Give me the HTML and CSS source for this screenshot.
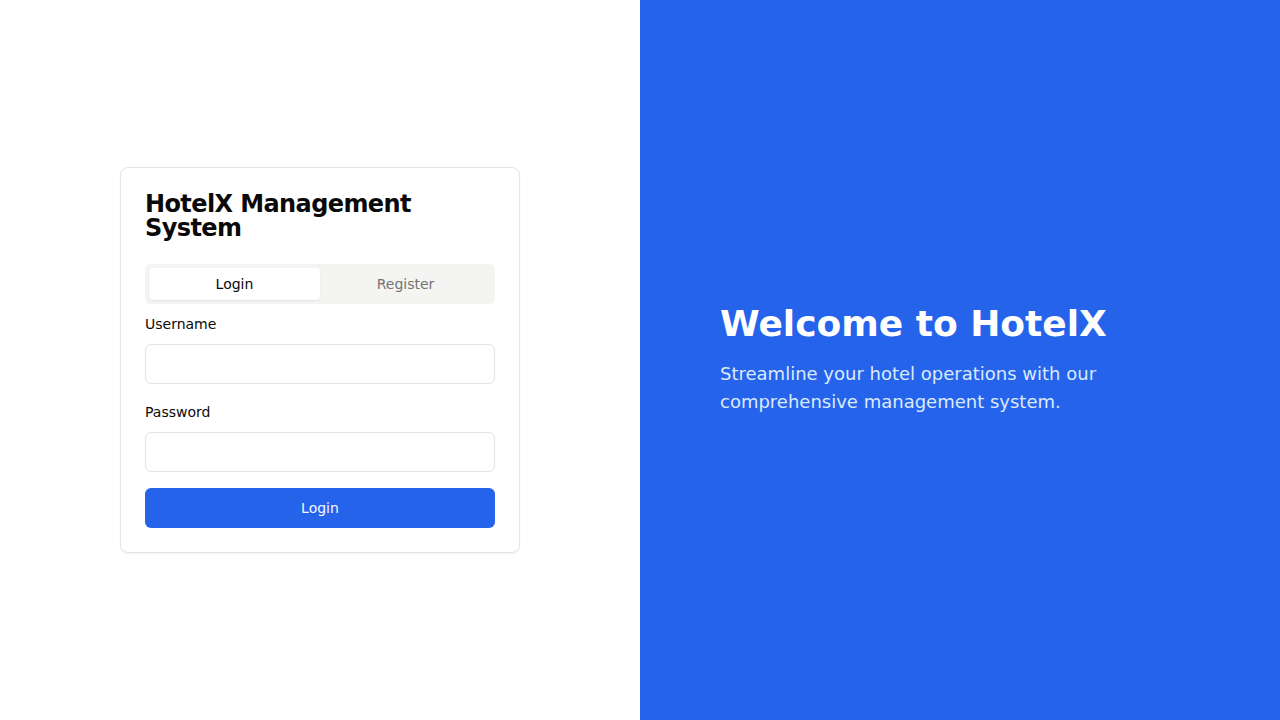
FILE: index.html
```html
<!DOCTYPE html>
<html lang="en">
<head>
<meta charset="utf-8">
<title>HotelX Management System</title>
<link rel="stylesheet" href="styles.css">
</head>
<body>
<div class="page">
  <section class="left">
    <div class="card">
      <h1 class="card-title">HotelX Management System</h1>
      <div class="tabs">
        <div class="tab-list">
          <button class="tab active">Login</button>
          <button class="tab">Register</button>
        </div>
        <form class="form">
          <div class="field">
            <label class="label" for="username">Username</label>
            <input class="input" id="username" type="text">
          </div>
          <div class="field">
            <label class="label" for="password">Password</label>
            <input class="input" id="password" type="password">
          </div>
          <button class="submit" type="button">Login</button>
        </form>
      </div>
    </div>
  </section>
  <section class="right">
    <div class="hero">
      <h2 class="hero-title">Welcome to HotelX</h2>
      <p class="hero-text">Streamline your hotel operations with our comprehensive management system.</p>
    </div>
  </section>
</div>
</body>
</html>
```

FILE: styles.css
```css
* { box-sizing: border-box; }
html, body { margin: 0; padding: 0; }
body {
  font-family: "DejaVu Sans", sans-serif;
  color: #0a0a0a;
  background: #ffffff;
}
.page {
  display: flex;
  width: 1280px;
  height: 720px;
}
.left {
  width: 640px;
  height: 100%;
  display: flex;
  align-items: center;
  justify-content: center;
  background: #ffffff;
}
.card {
  width: 400px;
  border: 1px solid #e4e4e7;
  border-radius: 8px;
  background: #fff;
  box-shadow: 0 1px 2px rgba(0,0,0,0.05);
  padding: 24px;
}
.card-title {
  margin: 0 0 24px;
  font-size: 24px;
  line-height: 24px;
  font-weight: 700;
  letter-spacing: -0.6px;
  color: #0a0a0a;
}
.tab-list {
  display: grid;
  grid-template-columns: 1fr 1fr;
  height: 40px;
  padding: 4px;
  background: #f4f4f3;
  border-radius: 6px;
}
.tab {
  border: 0;
  background: transparent;
  font-family: "DejaVu Sans", sans-serif;
  font-size: 14px;
  color: #737373;
  border-radius: 4px;
  padding: 0;
}
.tab.active {
  background: #ffffff;
  color: #0a0a0a;
  box-shadow: 0 1px 2px rgba(0,0,0,0.08);
}
.form {
  margin-top: 10px;
  display: flex;
  flex-direction: column;
}
.field {
  display: flex;
  flex-direction: column;
  gap: 10px;
  margin-bottom: 18px;
}
.field:last-of-type { margin-bottom: 16px; }
.label {
  font-size: 14px;
  line-height: 20px;
  color: #0a0a0a;
}
.input {
  height: 40px;
  width: 100%;
  border: 1px solid #e4e4e7;
  border-radius: 6px;
  background: #fff;
  font-family: "DejaVu Sans", sans-serif;
  font-size: 14px;
  padding: 0 12px;
}
.submit {
  height: 40px;
  width: 100%;
  border: 0;
  border-radius: 6px;
  background: #2563eb;
  color: #f5f8ff;
  font-family: "DejaVu Sans", sans-serif;
  font-size: 14px;
}
.right {
  width: 640px;
  height: 100%;
  background: #2563eb;
  display: flex;
  align-items: center;
  padding: 0 80px;
}
.hero-title {
  margin: 0 0 16px;
  font-size: 36px;
  line-height: 40px;
  font-weight: 700;
  color: #ffffff;
}
.hero-text {
  margin: 0;
  max-width: 448px;
  font-size: 18px;
  line-height: 28px;
  color: #dbeafe;
}
```
